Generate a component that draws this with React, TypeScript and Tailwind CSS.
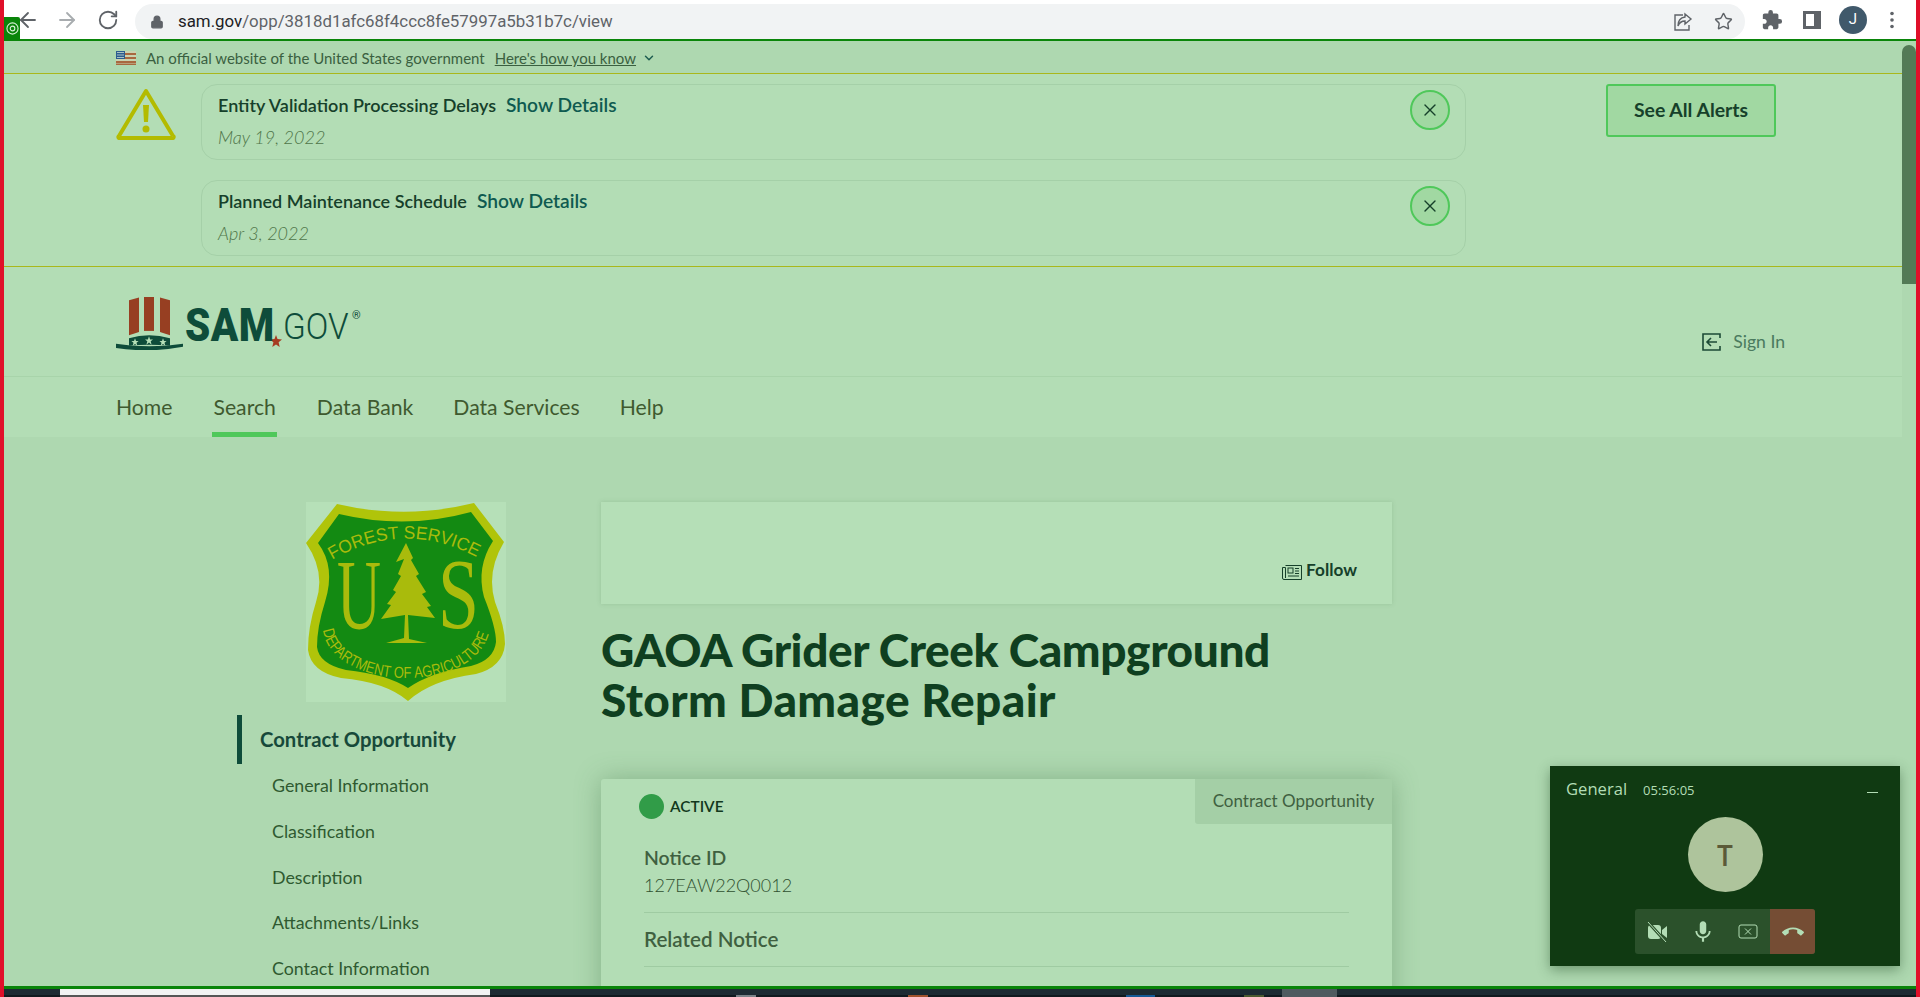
import React from "react";
import { ArrowLeft, ArrowRight, RotateCw, Lock, Star, ChevronDown, X } from "lucide-react";
import { MdExtension, MdCallEnd, MdMic } from "react-icons/md";

const SIDE_LINKS = ["General Information", "Classification", "Description", "Attachments/Links", "Contact Information"];
const NAV_LINKS = ["Home", "Search", "Data Bank", "Data Services", "Help"];

const Flag = () => (
  <svg width="20" height="14" viewBox="0 0 20 14">
    <rect width="20" height="14" fill="#c9d3b0" />
    <rect y="2" width="20" height="2" fill="#a8683f" />
    <rect y="6" width="20" height="2" fill="#a8683f" />
    <rect y="10" width="20" height="2" fill="#a8683f" />
    <rect y="12.5" width="20" height="1.5" fill="#a8683f" />
    <rect width="9" height="8" fill="#2c5c8f" />
    <rect x="1" y="1" width="7" height="1" fill="#a9c4c4" />
    <rect x="1" y="3.5" width="7" height="1" fill="#a9c4c4" />
    <rect x="1" y="6" width="7" height="1" fill="#a9c4c4" />
  </svg>
);

const Warning = () => (
  <svg width="60" height="52" viewBox="0 0 60 52">
    <path d="M30 3 L57 48 a1 1 0 0 1 -1 2 H4 a1 1 0 0 1 -1 -2 Z" fill="none" stroke="#b3bb00" strokeWidth="4" strokeLinejoin="round" />
    <path d="M27 17 h6 l-1 17 h-4 Z" fill="#b3bb00" />
    <circle cx="30" cy="41" r="3.5" fill="#b3bb00" />
  </svg>
);

const Logo = () => (
  <div className="flex items-end">
    <svg width="67" height="53" viewBox="0 0 67 50" preserveAspectRatio="none" className="mb-[-4px]">
      <path d="M13 3 L23 0.5 V33 L13 36 Z" fill="#973f22" />
      <path d="M28 0 H38 V32 H28 Z" fill="#973f22" />
      <path d="M44 0.5 L54 3 V36 L44 33 Z" fill="#973f22" />
      <path d="M13 39 Q33 33 54 39 V46 Q33 44 13 46 Z" fill="#0e4c3a" />
      <path d="M0 44 Q33 49 67 44 V47 Q33 53 0 48 Z" fill="#0e4c3a" />
      <polygon points="19,39 20,41.6 22.6,41.6 20.5,43.2 21.3,46 19,44.3 16.7,46 17.5,43.2 15.4,41.6 18,41.6" fill="#b5dfb7" />
      <polygon points="33,37 34.1,40 37,40 34.7,41.8 35.6,45 33,43 30.4,45 31.3,41.8 29,40 31.9,40" fill="#b5dfb7" />
      <polygon points="47,39 48,41.6 50.6,41.6 48.5,43.2 49.3,46 47,44.3 44.7,46 45.5,43.2 43.4,41.6 46,41.6" fill="#b5dfb7" />
    </svg>
    <span className="ml-[2px] w-[86px] origin-left scale-x-[0.86] text-[47px] leading-[42px] font-black tracking-[0.5px] text-[#0e4c3a] [font-family:Roboto,sans-serif]">SAM</span>
    <svg width="12" height="12" viewBox="0 0 12 12" className="mb-[-1px] ml-[-1px]">
      <polygon points="6,0 7.5,4 12,4.4 8.6,7.2 9.7,12 6,9.4 2.3,12 3.4,7.2 0,4.4 4.5,4" fill="#a63c22" />
    </svg>
    <span className="ml-[1px] w-[69px] origin-left scale-x-[0.9] text-[37px] leading-[38px] font-light text-[#0e4c3a] [font-family:Roboto,sans-serif]">GOV</span>
    <span className="mt-[13px] self-start text-[11px] leading-none font-normal text-[#0e4c3a] [font-family:Roboto,sans-serif]">®</span>
  </div>
);

const ForestShield = () => (
  <svg width="200" height="200" viewBox="0 0 200 200" className="bg-[#b6e0b8]">
    <path d="M31 2 Q100 18 168 1 L198 40 Q180 70 189 100 Q199 125 199 142 Q197 165 170 172 Q125 178 102 199 Q80 180 35 176 Q5 170 2 148 Q2 125 10 100 Q20 70 0 41 Z" fill="#b0c40a" />
    <path d="M33 12 Q100 28 165 10 L187 39 Q170 65 178 95 Q190 125 190 140 Q188 158 165 164 Q125 170 102 186 Q80 172 40 168 Q13 162 11 145 Q11 125 19 100 Q30 65 12 41 Z" fill="#138a12" />
    <defs>
      <path id="topArc" d="M26 58 Q100 15 176 58" />
      <path id="botArc" d="M17 128 C25 190 175 195 184 125" />
    </defs>
    <text fontSize="18" fill="#a9bb0c" fontFamily="'Liberation Sans', sans-serif">
      <textPath href="#topArc" textLength="152" lengthAdjust="spacingAndGlyphs">FOREST SERVICE</textPath>
    </text>
    <text fontSize="16" fill="#a9bb0c" fontFamily="'Liberation Sans', sans-serif">
      <textPath href="#botArc" textLength="204" lengthAdjust="spacingAndGlyphs">DEPARTMENT OF AGRICULTURE</textPath>
    </text>
    <text x="31" y="126" fontSize="100" fill="#a9bb0c" fontFamily="'Liberation Serif', serif" textLength="44" lengthAdjust="spacingAndGlyphs">U</text>
    <text x="132" y="125" fontSize="100" fill="#a9bb0c" fontFamily="'Liberation Serif', serif" textLength="41" lengthAdjust="spacingAndGlyphs">S</text>
    <path d="M100 41 L107 56 L105 58 L113 72 L110 74 L120 90 L116 92 L125 104 L121 105 L129 116 L102 113 L103 137 L121 141 L80 141 L98 136 L99 113 L75 117 L85 103 L81 102 L90 90 L87 88 L95 74 L92 72 L98 57 L90 60 Z" fill="#a9bb0c" />
  </svg>
);

const AlertCard = ({ title, date }: { title: string; date: string }) => (
  <div className="flex h-[76px] items-start justify-between rounded-[16px] border border-[#a5d0a8] pl-[16px] pr-[15px] pt-[5px]">
    <div>
      <div className="flex h-[30px] items-center gap-[10px]">
        <span className="text-[18px] font-semibold text-[#16402a]">{title}</span>
        <span className="text-[19.2px] font-semibold text-[#0f5a50]">Show Details</span>
      </div>
      <div className="mt-[4px] text-[18px] font-light text-[#4f7549] italic">{date}</div>
    </div>
    <div className="flex h-[40px] w-[40px] items-center justify-center rounded-full border-2 border-[#4fc85a] bg-[#a1d8a2]">
      <X size={20} strokeWidth={1.6} className="text-[#16402a]" />
    </div>
  </div>
);

export default function App() {
  return (
    <div className="relative flex h-[997px] w-[1920px] flex-col overflow-hidden border-l-[4px] border-r-[4px] border-[#e0102a] bg-[#aed8b0] [font-family:Lato,sans-serif]">
      {/* browser toolbar */}
      <div className="relative flex h-[39px] items-center bg-white pl-[12px] text-[#5f6368]">
        <ArrowLeft size={24} strokeWidth={1.8} />
        <ArrowRight size={24} strokeWidth={1.8} className="ml-[15px] text-[#a8acaf]" />
        <RotateCw size={22} strokeWidth={2} className="ml-[18px]" />
        <div className="ml-[16px] mt-[4px] flex h-[35px] w-[1610px] items-center rounded-[18px] bg-[#f1f3f4] pl-[15px] pr-[12px]">
          <Lock size={14} fill="#5f6368" />
          <span className="ml-[14px] text-[16.85px] text-[#202124] [font-family:Roboto,sans-serif]">
            sam.gov<span className="text-[#5f6368]">/opp/3818d1afc68f4ccc8fe57997a5b31b7c/view</span>
          </span>
          <svg width="20" height="20" viewBox="0 0 20 20" className="ml-auto" fill="none" stroke="#5f6368" strokeWidth="1.4">
            <path d="M10 3 H2 V18 H16 V13" />
            <path d="M12 2 L18 7 L12 12 V9 Q7 9 5 14 Q5 6 12 5 Z" />
          </svg>
          <Star size={19} strokeWidth={1.8} className="ml-[21px]" />
        </div>
        <MdExtension size={22} className="ml-[16px]" />
        <svg width="18" height="18" viewBox="0 0 18 18" className="ml-[20px]">
          <path d="M0 0 H18 V18 H0 Z M3 3 V15 H11 V3 Z" fill="#5f6368" fillRule="evenodd" />
        </svg>
        <div className="ml-[18px] flex h-[28px] w-[28px] items-center justify-center rounded-full bg-[#40596b] text-[15px] text-white [font-family:Roboto,sans-serif]">J</div>
        <svg width="4" height="18" viewBox="0 0 4 18" className="ml-[23px]">
          <circle cx="2" cy="2.5" r="1.8" fill="#5f6368" />
          <circle cx="2" cy="9" r="1.8" fill="#5f6368" />
          <circle cx="2" cy="15.5" r="1.8" fill="#5f6368" />
        </svg>
      </div>
      <div className="h-[2px] bg-[#0a850a]" />

      {/* gov banner */}
      <div className="flex h-[33px] items-center border-b border-[#a9b81c] bg-[#aed8b0] pl-[112px] pt-[2px] text-[15px] text-[#3a6040]">
        <Flag />
        <span className="ml-[10px]">An official website of the United States government</span>
        <span className="ml-[10px] underline">Here's how you know</span>
        <ChevronDown size={14} strokeWidth={2.5} className="ml-[6px] text-[#1d5c50]" />
      </div>

      {/* alerts */}
      <div className="flex h-[193px] border-b border-[#a9b81c] bg-[#b3ddb5] pl-[112px] pt-[10px]">
        <div className="w-[85px] pt-[4px]">
          <Warning />
        </div>
        <div className="flex w-[1265px] flex-col gap-[20px]">
          <AlertCard title="Entity Validation Processing Delays" date="May 19, 2022" />
          <AlertCard title="Planned Maintenance Schedule" date="Apr 3, 2022" />
        </div>
        <div className="ml-[140px] flex h-[53px] w-[170px] items-center justify-center rounded-[3px] border-2 border-[#4fc85a] bg-[#a1d8a2] pb-[1px] text-[19.4px] font-bold text-[#16402a]">
          See All Alerts
        </div>
      </div>

      {/* logo row */}
      <div className="flex h-[110px] items-center justify-between border-b border-[#a8d4aa] bg-[#b3ddb5] pl-[112px] pr-[131px]">
        <div>
          <Logo />
        </div>
        <div className="mt-[41px] flex items-center gap-[12px] text-[17.6px] text-[#4a7a5e]">
          <svg width="19" height="18" viewBox="0 0 19 18" fill="none" stroke="#1c4a36" strokeWidth="1.6">
            <path d="M18 5 V1 H1 V17 H18 V13" />
            <path d="M15 9 H5 M9 5 L5 9 L9 13" />
          </svg>
          Sign In
        </div>
      </div>

      {/* nav */}
      <div className="flex h-[60px] items-end gap-[40px] bg-[#b3ddb5] pl-[112px] text-[21.2px] text-[#3f5a2f]">
        {NAV_LINKS.map((link) => (
          <div
            key={link}
            className={`flex h-[60px] items-center border-b-[5px] pt-[6px] ${link === "Search" ? "border-[#4fc85a] pl-[1px] pr-[1px]" : "border-transparent"}`}
          >
            {link}
          </div>
        ))}
      </div>

      {/* page body */}
      <div className="flex min-h-0 flex-1 overflow-hidden pl-[233px] pt-[65px]">
        <div className="w-[364px] shrink-0">
          <div className="ml-[69px]">
            <ForestShield />
          </div>
          <div className="mt-[13px] flex h-[49px] items-center border-l-[5px] border-[#0e4c3a] pl-[18px] text-[20.3px] font-bold text-[#17493a]">
            Contract Opportunity
          </div>
          <div className="mt-[-1px] flex flex-col pl-[35px]">
            {SIDE_LINKS.map((link) => (
              <div key={link} className="flex h-[45.6px] items-center text-[17.8px] text-[#2f5a30]">
                {link}
              </div>
            ))}
          </div>
        </div>
        <div className="w-[791px] shrink-0">
          <div className="flex h-[102px] items-end justify-end bg-[#b5dfb7] pb-[21px] pr-[35px] shadow-[0_0_4px_rgba(90,140,95,0.25)]">
            <svg width="20" height="15" viewBox="0 0 20 15" fill="none" stroke="#16402a" strokeWidth="1" className="mb-[3px] mr-[4px]">
              <path d="M3.5 0.5 H19.5 V14.5 H2 Q0.5 14.5 0.5 13 V2.5 H3.5 V13" />
              <rect x="6" y="3" width="5" height="5" />
              <path d="M13 3.5 H17 M13 6 H17 M13 8.5 H17 M6 11 H17" />
            </svg>
            <span className="text-[17.2px] font-bold text-[#16402a]">Follow</span>
          </div>
          <h1 className="mt-[21px] text-[46px] leading-[50px] font-black tracking-[-0.4px] text-[#0f3f20]">
            GAOA Grider Creek Campground
            <br />
            <span className="tracking-[0.4px]">Storm Damage Repair</span>
          </h1>
          <div className="relative mt-[54px] h-[240px] rounded-t-[3px] bg-[#b3ddb5] pl-[43px] pr-[43px] pt-[15px] shadow-[0_0_26px_rgba(70,120,75,0.4)]">
            <div className="absolute right-0 top-0 flex h-[45px] w-[197px] items-center justify-center rounded-bl-[3px] bg-[#a4cfa6] pb-[1px] text-[17px] text-[#3f6040]">
              Contract Opportunity
            </div>
            <div className="ml-[-5px] flex items-center gap-[6px]">
              <span className="h-[25px] w-[25px] rounded-full bg-[#319c48]" />
              <span className="text-[15.4px] font-semibold text-[#12381c]">ACTIVE</span>
            </div>
            <div className="mt-[26px] text-[19.4px] leading-[26px] font-semibold text-[#3f6040]">Notice ID</div>
            <div className="text-[18px] leading-[28px] font-light text-[#2f5030]">127EAW22Q0012</div>
            <div className="mt-[13px] h-[1px] bg-[#9fcba2]" />
            <div className="mt-[13px] text-[20.6px] leading-[26px] font-semibold text-[#3f6040]">Related Notice</div>
            <div className="mt-[14px] h-[1px] bg-[#9fcba2]" />
          </div>
        </div>
      </div>

      {/* taskbar */}
      <div className="h-[3px] bg-[#0a850a]" />
      <div className="flex h-[8px] items-end overflow-hidden bg-[linear-gradient(#1c2b33_75%,#0f1a1f_75%)]">
        <div className="ml-[56px] flex h-[8px] w-[430px] flex-col">
          <div className="h-[6px] bg-[#f2f2f2]" />
          <div className="h-[2px] bg-[#555555]" />
        </div>
        <div className="ml-[246px] h-[2px] w-[20px] bg-[#7a8388]" />
        <div className="ml-[152px] h-[2px] w-[20px] bg-[#a0522d]" />
        <div className="ml-[198px] h-[2px] w-[29px] bg-[#155a96]" />
        <div className="ml-[89px] h-[2px] w-[20px] bg-[#4a5a30]" />
        <div className="ml-[18px] h-[8px] w-[55px] bg-[#4f5b60]" />
        <div className="ml-[455px] h-[8px] self-start overflow-hidden pt-[5px] text-[13px] leading-[16px] text-[#cfd3d6] [font-family:Roboto,sans-serif]">10:55</div>
      </div>

      {/* extension tab */}
      <div className="absolute left-0 top-[17px] flex h-[22px] w-[16px] items-center justify-center rounded-tr-[2px] bg-[#0a850a]">
        <svg width="13" height="13" viewBox="0 0 14 14" fill="none" stroke="#d6f0d6" strokeWidth="1.2">
          <circle cx="7" cy="7" r="6" />
          <circle cx="7" cy="7" r="2.5" />
        </svg>
      </div>

      {/* scrollbar */}
      <div className="absolute right-0 top-[41px] h-[945px] w-[14px] bg-[#aed8b0]">
        <div className="mt-[4px] h-[239px] rounded-t-[7px] bg-[#537a56]" />
      </div>

      {/* call widget */}
      <div className="absolute left-[1546px] top-[766px] flex h-[200px] w-[350px] flex-col items-center bg-[#103a12] shadow-[0_4px_12px_rgba(30,70,35,0.45)]">
        <div className="flex h-[47px] w-full items-center pl-[16px] pr-[22px] text-[#b3ddb5] [font-family:'Open_Sans',sans-serif]">
          <span className="text-[16.6px]">General</span>
          <span className="ml-[16px] mt-[2px] text-[13px]">05:56:05</span>
          <span className="ml-auto mt-[6px] h-[1px] w-[11px] bg-[#b3ddb5]" />
        </div>
        <div className="mt-[4px] flex h-[75px] w-[75px] items-center justify-center rounded-full bg-[#aec49c] text-[28px] font-semibold text-[#5b5a38] [font-family:'Open_Sans',sans-serif]">
          T
        </div>
        <div className="mt-[17px] flex h-[45px] w-[180px] overflow-hidden rounded-[3px] bg-[#2b512b] text-[#b3ddb5]">
          <div className="flex w-[45px] items-center justify-center">
            <svg width="21" height="20" viewBox="0 0 21 20" fill="currentColor">
              <rect x="1" y="3" width="13" height="14" rx="3" />
              <path d="M15 8 L20 4 V16 L15 12 Z" />
              <path d="M1 0 L19 20" stroke="#2b512b" strokeWidth="3" />
              <path d="M1 0 L19 20" stroke="currentColor" strokeWidth="1" />
            </svg>
          </div>
          <div className="flex w-[45px] items-center justify-center">
            <MdMic size={26} />
          </div>
          <div className="flex w-[45px] items-center justify-center">
            <svg width="20" height="15" viewBox="0 0 20 15" fill="none" stroke="currentColor" strokeWidth="1">
              <rect x="1" y="1" width="18" height="13" rx="2" />
              <path d="M7 4.5 L13 10.5 M13 4.5 L7 10.5" />
            </svg>
          </div>
          <div className="flex w-[45px] items-center justify-center bg-[#754d34]">
            <MdCallEnd size={22} />
          </div>
        </div>
      </div>
    </div>
  );
}
